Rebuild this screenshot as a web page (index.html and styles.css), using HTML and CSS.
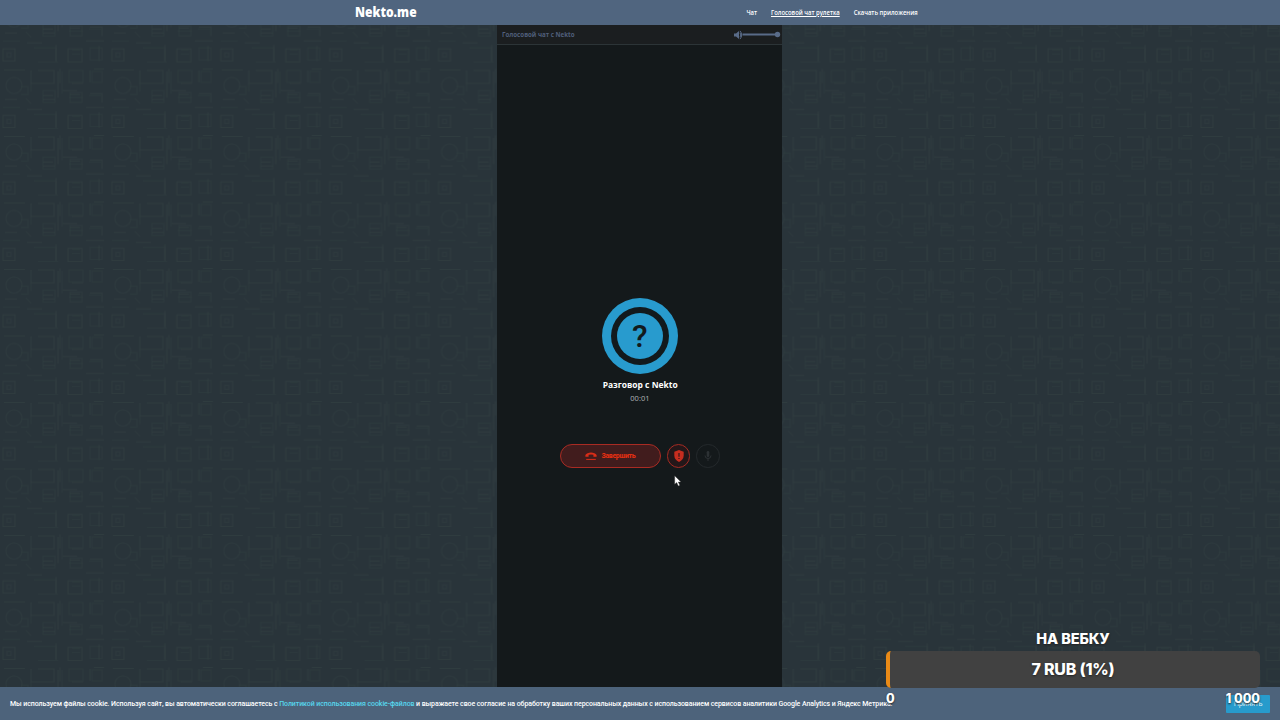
FILE: index.html
```html
<!DOCTYPE html>
<html lang="ru">
<head>
<meta charset="utf-8">
<title>Nekto.me</title>
<link rel="stylesheet" href="styles.css">
</head>
<body>
<svg class="wallpaper" width="1280" height="720" aria-hidden="true">
  <defs>
    <pattern id="tech" width="108.9" height="66.5" patternUnits="userSpaceOnUse" y="1">
      <g fill="none" stroke="#303d40" stroke-width="1">
        <path d="M4 2.500h21M31 3v13h23V3h-16M5 32h12M60 1.500v14M63 23h14M90 3v12M58 4v26M94 1.500h10M3 48h12v12H3zM68 48h14v13H68zM43 28h10M43 32h12M70 27h10M72 16h11M90 26h12v9M27 42h15M99 45v15M86 40h18M56 44v16" opacity=".85"/>
        <path d="M34 47h22v14H38M69 3h14v12H69zM89 28h12M90 47h12v12H90zM26 31l5 5M21 19h7v8h-7M38 61h20M3 40h17M43 23h12v12H43zM72 49h8M72 53h8M92 4h10v11H92zM69 30h14M31 16v8M62 4v22" opacity=".5"/>
        <g opacity=".55"><circle cx="14" cy="18" r="8"/><rect x="7" y="52" width="4" height="4"/><rect x="70" y="25" width="12" height="10"/></g>
      </g>
    </pattern>
  </defs>
  <rect width="1280" height="720" fill="#29343a"/>
  <rect width="1280" height="720" fill="url(#tech)"/>
</svg>

<div class="page">
  <header class="topbar">
    <div class="brand">Nekto.me</div>
    <nav class="nav">
      <a class="nav-chat">Чат</a>
      <a class="nav-voice">Голосовой чат рулетка</a>
      <a class="nav-apps">Скачать приложения</a>
    </nav>
  </header>

  <main class="panel">
    <div class="panel-head">
      <span class="panel-title">Голосовой чат с Nekto</span>
      <svg class="volume" width="48" height="10" viewBox="0 0 48 10">
        <path d="M1 3.500h2L6 1v8L3 6.500H1z" fill="#596b88"/>
        <path d="M7 2.800q1.600 2.200 0 4.400M7 .9q3.400 4.100 0 8.200" fill="none" stroke="#596b88"/>
        <path d="M9.500 4.500H44" stroke="#596b88" stroke-width="2"/>
        <circle cx="44.500" cy="4.500" r="2.700" fill="#596b88"/>
      </svg>
    </div>
    <div class="call">
      <div class="avatar"><div class="avatar-ring"><div class="avatar-core">?</div></div></div>
      <div class="peer">Разговор с Nekto</div>
      <div class="timer">00:01</div>
      <div class="actions">
        <div class="end-call">
          <svg width="12" height="10" viewBox="0 0 12 10">
            <path d="M.4 5.700V4C2 .5 10 .5 11.600 4v1.700H8.400V3.800Q6 3 3.600 3.800v1.900z" fill="#d92d18"/>
            <path d="M1.200 8.400h9.600" stroke="#d92d18" stroke-width="1"/>
          </svg>
          <span class="end-text">Завершить</span>
        </div>
        <div class="round report">
          <svg width="12" height="14" viewBox="0 0 12 14">
            <path d="M6 1 10.700 2.800V6.500Q10.500 10.800 6 13Q1.500 10.800 1.300 6.500V2.800z" fill="#c72d1f"/>
            <path d="M6 4v3.700M6 8.900v1.200" stroke="#331719" stroke-width="1.200"/>
          </svg>
        </div>
        <div class="round mic">
          <svg width="8" height="12" viewBox="0 0 8 12">
            <rect x="2.700" y="1" width="2.600" height="6" rx="1.300" fill="#2c3134"/>
            <path d="M1 5.500Q1 8.500 4 8.500T7 5.500M4 8.500V11" fill="none" stroke="#2c3134"/>
          </svg>
        </div>
      </div>
    </div>
  </main>

  <footer class="cookies">
    <p class="cookie-text">Мы используем файлы cookie. Используя сайт, вы автоматически соглашаетесь с <a class="policy">Политикой использования cookie-файлов</a> и выражаете свое согласие на обработку ваших персональных данных с использованием сервисов аналитики Google Analytics и Яндекс Метрика.</p>
    <div class="accept">Принять</div>
  </footer>
</div>

<aside class="goal">
  <div class="goal-title"><span>НА ВЕБКУ</span></div>
  <div class="goal-bar"><span>7 RUB (1%)</span></div>
  <div class="goal-scale"><span>0</span><span class="goal-max">1 000</span></div>
</aside>

<svg class="cursor" width="8" height="12" viewBox="0 0 8 12"><path d="M.7.7V9.300L2.700 7.500 4.300 11 5.800 10.300 4.300 7H7z" fill="#fff" stroke="#333" stroke-width=".4"/></svg>
</body>
</html>
```

FILE: styles.css
```css
* { box-sizing: border-box; }
body {
  margin: 0;
  width: 1280px;
  height: 720px;
  overflow: hidden;
  background: #29343a;
  font-family: "Open Sans", "Noto Sans", sans-serif;
}
svg { display: block; }
.wallpaper { position: absolute; inset: 0; }
.page { position: relative; display: flex; flex-direction: column; width: 1280px; height: 720px; }

.topbar {
  display: flex;
  flex: none;
  justify-content: space-between;
  height: 25px;
  padding: 0 362.500px 0 355px;
  background: #50657f;
  line-height: 25px;
  white-space: nowrap;
}
.brand {
  color: #fff;
  font: 800 14.500px/24px "Open Sans", sans-serif;
  transform: scaleX(0.83);
  transform-origin: 0 50%;
}
.nav {
  display: flex;
  gap: 16.500px;
  color: #fff;
  font-size: 7px;
  font-weight: 600;
  transform: scaleX(0.845);
  transform-origin: 100% 50%;
}
.nav-voice { text-decoration: underline; }

.panel {
  display: flex;
  flex: 1;
  flex-direction: column;
  width: 285px;
  margin-left: 497.400px;
  background: #14191b;
}
.panel-head {
  display: flex;
  flex: none;
  align-items: center;
  justify-content: space-between;
  height: 20px;
  padding: 0 1px 0 5px;
  border-bottom: 1px solid #2c3437;
  background: #1b1e20;
}
.panel-title {
  padding-bottom: 2px;
  color: #505f7b;
  font-size: 7.500px;
  font-weight: 700;
  line-height: 10px;
  white-space: nowrap;
  transform: scaleX(0.825);
  transform-origin: 0 50%;
}
.call { display: flex; flex-direction: column; align-items: center; padding-top: 253px; }
.avatar {
  display: grid;
  place-items: center;
  width: 76px;
  height: 76px;
  border-radius: 50%;
  background: #289bce;
}
.avatar-ring { display: grid; place-items: center; width: 58px; height: 58px; border-radius: 50%; background: #121a1d; }
.avatar-core {
  width: 46px;
  height: 46px;
  border-radius: 50%;
  background: #289bce;
  color: #121a1d;
  font: 500 32px/47px Roboto, sans-serif;
  text-align: center;
}
.peer { height: 20px; color: #fff; font-size: 9.500px; font-weight: 700; line-height: 21px; white-space: nowrap; transform: scaleX(0.89); }
.timer { height: 9px; color: #b0b4b6; font: 7.500px/9px "Open Sans", sans-serif; }
.actions { display: flex; gap: 6px; margin-top: 41px; }
.end-call {
  display: flex;
  align-items: center;
  justify-content: center;
  gap: 4px;
  width: 101px;
  height: 24px;
  border: 1px solid #a92b23;
  border-radius: 12px;
  background: #411c1d;
}
.end-text { color: #e22f12; font: 800 7px/11px Roboto, sans-serif; letter-spacing: -0.35px; white-space: nowrap; }
.round { display: grid; place-items: center; width: 23.500px; height: 23.500px; border: 1px solid #a52b23; border-radius: 50%; }
.report { background: #241719; }
.mic { border-color: #24292c; }

.cookies {
  display: flex;
  flex: none;
  align-items: center;
  justify-content: space-between;
  height: 33px;
  padding: 0 10px;
  background: #4d637b;
}
.cookie-text { margin: 0; color: #fff; font: 500 7px/12px Roboto, sans-serif; letter-spacing: -0.08px; white-space: nowrap; }
.policy { color: #57d6ed; }
.accept {
  width: 44px;
  height: 18px;
  border-radius: 1px;
  background: #279bcc;
  color: #d9edf6;
  font: 7.500px/18px Roboto, sans-serif;
  letter-spacing: -0.2px;
  text-align: center;
}

.goal {
  position: absolute;
  left: 886px;
  top: 627px;
  width: 374px;
  color: #fff;
  font-family: Inter, sans-serif;
  font-weight: 800;
  text-shadow: 0 1px 2px #222;
}
.goal-title { height: 24px; font-size: 14.500px; line-height: 23px; letter-spacing: -0.1px; text-align: center; }
.goal-bar {
  height: 37px;
  padding-right: 4px;
  border-left: 4px solid #e98a17;
  border-radius: 5px;
  background: #414141;
  font-size: 16px;
  letter-spacing: -0.2px;
  line-height: 36px;
  text-align: center;
}
.goal-scale { display: flex; justify-content: space-between; font-size: 12.500px; line-height: 22px; }
.cursor { position: absolute; left: 674px; top: 475px; }
```
